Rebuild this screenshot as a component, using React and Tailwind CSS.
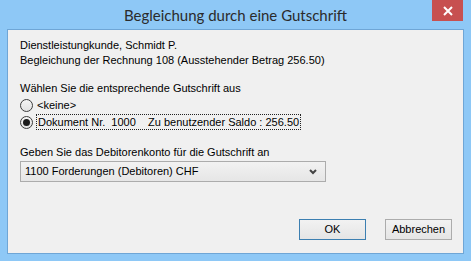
import React from "react";

function Radio({ checked }) {
  return (
    <span className="flex items-center justify-center w-[13px] h-[13px] rounded-full border border-[#3c3c3c] bg-gradient-to-b from-[#f4f4f4] to-[#e2e2e2] shrink-0">
      {checked && <span className="w-[7px] h-[7px] rounded-full bg-[#1a1a1a]" />}
    </span>
  );
}

export default function App() {
  const font = { fontFamily: '"Liberation Sans", Arial, sans-serif' };

  return (
    <div
      className="w-[471px] h-[261px] bg-[#8ec8f6] flex flex-col overflow-hidden text-[11px] text-black"
      style={font}
    >
      <div className="relative h-[29px] flex items-center justify-center shrink-0">
        <span className="text-[15px] text-[#2b2b2b] pt-[2px] font-['Lato',sans-serif]">Begleichung durch eine Gutschrift</span>
        <button className="absolute right-[8px] top-0 w-[31px] h-[21px] bg-[#c75050] flex items-center justify-center">
          <svg width="10" height="10" viewBox="0 0 10 10">
            <path d="M1 1 L9 9 M9 1 L1 9" stroke="white" strokeWidth="2" />
          </svg>
        </button>
      </div>

      <div className="mx-[7px] h-[225px] border border-[#6fa6d6] bg-[#f0f0f0] flex flex-col pl-[12px] pr-[11px] pt-[8px] leading-[15px]">
        <div>Dienstleistungkunde, Schmidt P.</div>
        <div>Begleichung der Rechnung 108 (Ausstehender Betrag 256.50)</div>

        <div className="mt-[13px]">Wählen Sie die entsprechende Gutschrift aus</div>
        <div className="flex items-center gap-[4px] mt-[1px] h-[16px]">
          <Radio />
          <span>&lt;keine&gt;</span>
        </div>
        <div className="flex items-center gap-[3px] mt-[1px] h-[16px]">
          <Radio checked />
          <span className="border border-dotted border-[#222] px-[1px] whitespace-pre leading-[14px]">
            {"Dokument Nr.  1000    Zu benutzender Saldo : 256.50"}
          </span>
        </div>

        <div className="mt-[15px]">Geben Sie das Debitorenkonto für die Gutschrift an</div>
        <div className="mt-[1px] w-[306px] h-[21px] border border-[#acacac] bg-gradient-to-b from-[#f2f2f2] to-[#e6e6e6] flex items-center justify-between pl-[4px] pr-[8px]">
          <span>1100 Forderungen (Debitoren) CHF</span>
          <svg width="8" height="6" viewBox="0 0 8 6">
            <path d="M1 1 L4 4 L7 1" stroke="#444" strokeWidth="2" fill="none" />
          </svg>
        </div>

        <div className="mt-[37px] flex justify-end gap-[19px]">
          <button className="w-[67px] h-[21px] border border-[#3c7fb1] bg-gradient-to-b from-[#f2f2f2] to-[#e5e5e5] flex items-center justify-center">
            OK
          </button>
          <button className="w-[67px] h-[21px] border border-[#acacac] bg-gradient-to-b from-[#f2f2f2] to-[#e5e5e5] flex items-center justify-center">
            Abbrechen
          </button>
        </div>
      </div>
    </div>
  );
}
